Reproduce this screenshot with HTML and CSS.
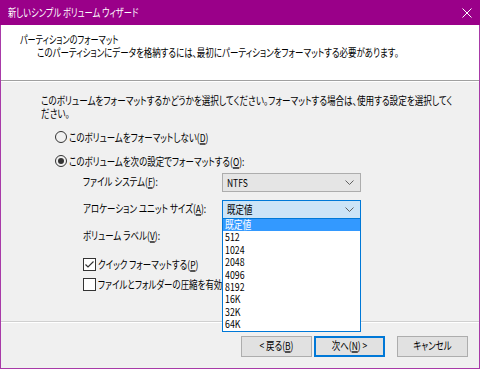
FILE: index.html
```html
<!DOCTYPE html>
<html lang="ja">
<head>
    <meta charset="UTF-8">
    <title>新しいシンプル ボリューム ウィザード</title>
    <link rel="stylesheet" href="styles.css">
</head>
<body>
    <div class="window">
        <div class="titlebar">
            <span class="t title">新しいシンプル ボリューム ウィザード</span>
            <svg class="close" width="10" height="10" viewBox="0 0 10 10">
                <path d="M0.5 0.5 L9.5 9.5 M9.5 0.5 L0.5 9.5" stroke="#fff" stroke-width="1" fill="none"/>
            </svg>
        </div>
        <div class="header">
            <div><span class="t header-title">パーティションのフォーマット</span></div>
            <div class="header-sub"><span class="t">このパーティションにデータを格納するには、最初にパーティションをフォーマットする必要があります。</span></div>
        </div>
        <div class="main">
            <p class="intro"><span class="t">このボリュームをフォーマットするかどうかを選択してください。フォーマットする場合は、使用する設定を選択してく</span><br><span class="t">ださい。</span></p>

            <div class="row radio-row first">
                <span class="radio"></span>
                <span class="t">このボリュームをフォーマットしない(<u>D</u>)</span>
            </div>
            <div class="row radio-row second">
                <span class="radio checked"></span>
                <span class="t">このボリュームを次の設定でフォーマットする(<u>O</u>):</span>
            </div>

            <div class="row field-row fs">
                <span class="label"><span class="t">ファイル システム(<u>F</u>):</span></span>
                <div class="combo">
                    <span class="t">NTFS</span>
                    <svg class="chevron" width="9" height="5" viewBox="0 0 9 5"><path d="M0.5 0.5 L4.5 4.5 L8.5 0.5" stroke="#606060" fill="none"/></svg>
                </div>
            </div>
            <div class="row field-row alloc">
                <span class="label"><span class="t">アロケーション ユニット サイズ(<u>A</u>):</span></span>
                <div class="combo-wrap">
                    <div class="combo open">
                        <span class="t">既定値</span>
                        <svg class="chevron" width="9" height="5" viewBox="0 0 9 5"><path d="M0.5 0.5 L4.5 4.5 L8.5 0.5" stroke="#606060" fill="none"/></svg>
                    </div>
                    <ul class="dropdown">
                        <li class="selected"><span class="t">既定値</span></li>
                        <li><span class="t">512</span></li>
                        <li><span class="t">1024</span></li>
                        <li><span class="t">2048</span></li>
                        <li><span class="t">4096</span></li>
                        <li><span class="t">8192</span></li>
                        <li><span class="t">16K</span></li>
                        <li><span class="t">32K</span></li>
                        <li><span class="t">64K</span></li>
                    </ul>
                </div>
            </div>
            <div class="row field-row vlabel">
                <span class="label"><span class="t">ボリューム ラベル(<u>V</u>):</span></span>
                <div class="textbox"></div>
            </div>

            <div class="row check-row quick">
                <span class="checkbox checked">
                    <svg width="11" height="11" viewBox="0 0 11 11"><path d="M1.5 5.5 L4 8 L9.5 2.5" stroke="#333" stroke-width="1.2" fill="none"/></svg>
                </span>
                <span class="t">クイック フォーマットする(<u>P</u>)</span>
            </div>
            <div class="row check-row compress">
                <span class="checkbox"></span>
                <span class="t">ファイルとフォルダーの圧縮を有効にする(<u>E</u>)</span>
            </div>
        </div>
        <div class="footer">
            <button class="btn"><span class="t">&lt; 戻る(<u>B</u>)</span></button>
            <button class="btn default"><span class="t">次へ(<u>N</u>) &gt;</span></button>
            <button class="btn cancel"><span class="t">キャンセル</span></button>
        </div>
    </div>
</body>
</html>
```

FILE: styles.css
```css
/* Window frame */
body {
    margin: 0;
    font-family: "Noto Sans CJK JP", sans-serif;
    font-size: 11px;
    font-feature-settings: "palt";
    color: #000;
    background-color: #f0f0f0;
    overflow: hidden;
}
/* Meiryo UI is much narrower than Noto: set the run small, then stretch it tall */
.t {
    --sx: 0.77;
    display: inline-block;
    white-space: nowrap;
    font-size: calc(11px * var(--sx));
    line-height: 13px;
    vertical-align: top;
    transform: scaleY(calc(1 / var(--sx)));
}
.window {
    width: 480px;
    height: 369px;
    box-sizing: border-box;
    border: 1px solid #a83aa8;
    border-top: none;
    display: flex;
    flex-direction: column;
    background-color: #f0f0f0;
}
.titlebar {
    height: 25px;
    margin: 0 -1px;
    padding: 0 8px;
    background-color: #9a0089;
    color: #fff;
    display: flex;
    align-items: center;
    justify-content: space-between;
}
.title {
    --sx: 0.75;
}

/* Header */
.header {
    height: 56px;
    box-sizing: border-box;
    padding: 8px 0 0 19px;
    background-color: #fff;
    border-bottom: 1px solid #a0a0a0;
    box-shadow: 0 1px 0 #fff;
}
.header div {
    height: 13px;
}
.header-title {
    --sx: 0.74;
}
.header-sub {
    margin-left: 17px;
}

/* Main area */
.main {
    height: 241px;
    box-sizing: border-box;
    padding: 13px 0 0 40px;
    border-bottom: 1px solid #d0d0d0;
    box-shadow: 0 1px 0 #fff;
}
.intro {
    margin: 0;
    height: 26px;
    line-height: 13px;
}
.intro .t {
    --sx: 0.78;
}
.row {
    display: flex;
    align-items: center;
}
.radio-row {
    height: 20px;
    margin-left: 14px;
}
.radio-row.first {
    margin-top: 7px;
}
.radio-row.second {
    margin-top: 4px;
}
.radio {
    width: 12px;
    height: 12px;
    border: 1px solid #333;
    border-radius: 50%;
    box-sizing: border-box;
    margin-right: 2px;
    display: flex;
    align-items: center;
    justify-content: center;
}
.radio.checked::after {
    content: "";
    width: 6px;
    height: 6px;
    border-radius: 50%;
    background-color: #333;
}

/* Labeled fields */
.field-row {
    height: 19px;
    margin-left: 42px;
}
.field-row.fs {
    margin-top: 2px;
}
.field-row.alloc {
    margin-top: 8px;
}
.field-row.vlabel {
    margin-top: 8px;
}
.label {
    width: 139px;
    flex-shrink: 0;
}
.combo-wrap {
    position: relative;
}
.combo {
    width: 139px;
    height: 19px;
    box-sizing: border-box;
    padding: 0 6px 0 4px;
    background-color: #e5e5e5;
    border: 1px solid #adadad;
    display: flex;
    align-items: center;
    justify-content: space-between;
}
.combo.open {
    background-color: #cce4f7;
    border-color: #0078d7;
}
.textbox {
    width: 139px;
    height: 19px;
    box-sizing: border-box;
    background-color: #fff;
    border: 1px solid #7a7a7a;
}
.dropdown {
    position: absolute;
    top: 18px;
    left: 0;
    width: 137px;
    margin: 0;
    padding: 0;
    list-style: none;
    background-color: #fff;
    border: 1px solid #0078d7;
    z-index: 2;
}
.dropdown li {
    height: 12.4px;
    line-height: 12.4px;
    padding-left: 2px;
}
.dropdown li .t {
    --sx: 0.8;
    line-height: 12.4px;
}
.dropdown li.selected {
    background-color: #3399ff;
    color: #fff;
}

/* Checkboxes */
.check-row {
    height: 20px;
    margin-left: 42px;
}
.check-row.quick {
    margin-top: 8px;
}
.check-row.compress {
    margin-top: 0;
}
.checkbox {
    width: 13px;
    height: 13px;
    box-sizing: border-box;
    border: 1px solid #333;
    background-color: #fff;
    margin-right: 2px;
    display: flex;
    align-items: center;
    justify-content: center;
}
.checkbox svg {
    display: block;
}

/* Footer buttons */
.footer {
    flex: 1;
    display: flex;
    justify-content: flex-end;
    align-items: flex-start;
    padding: 14px 11px 0 0;
}
button {
    font-family: inherit;
    font-size: 11px;
    font-feature-settings: "palt";
    width: 71px;
    height: 21px;
    padding: 0;
    background-color: #e1e1e1;
    border: 1px solid #adadad;
    color: #000;
}
.btn + .btn {
    margin-left: 2px;
}
.btn.default {
    border-color: #0078d7;
    box-shadow: inset 0 0 0 1px #0078d7;
}
.btn.cancel {
    margin-left: 12px;
}
```
